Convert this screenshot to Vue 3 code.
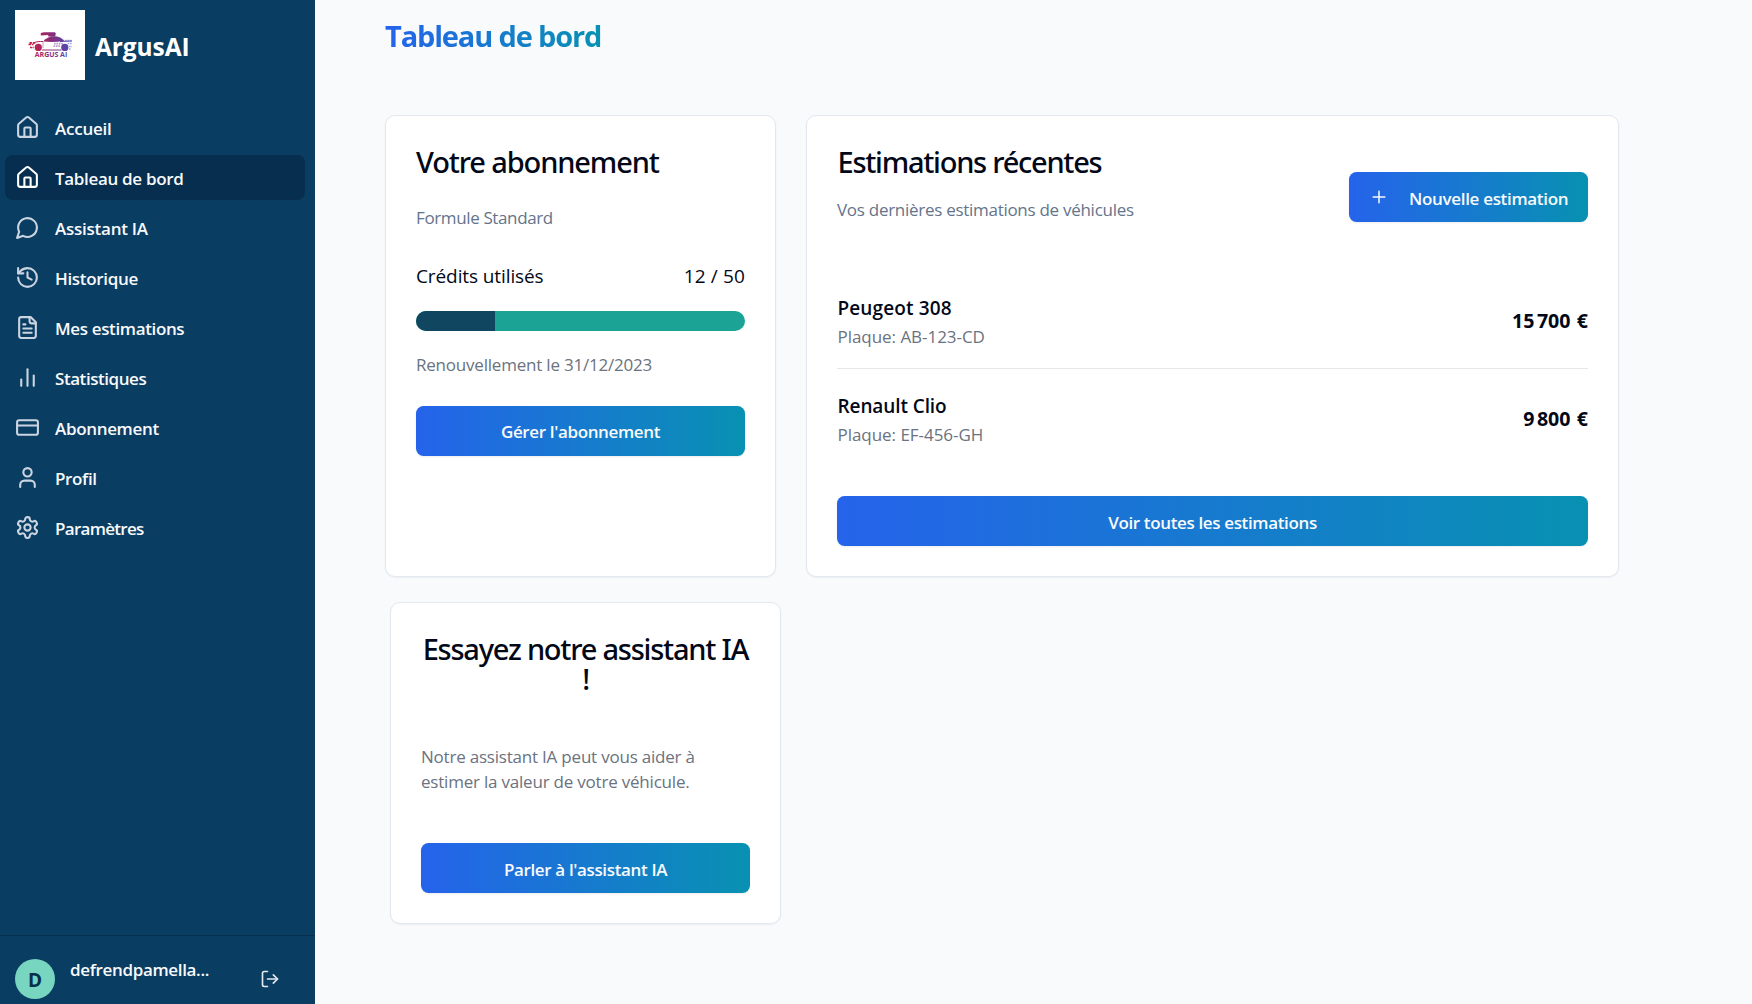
<script setup>
const nav = [
  { label: 'Accueil', icon: 'home', tracking: -0.24 },
  { label: 'Tableau de bord', icon: 'home', active: true, tracking: -0.32 },
  { label: 'Assistant IA', icon: 'chat', tracking: -0.25 },
  { label: 'Historique', icon: 'history', tracking: -0.33 },
  { label: 'Mes estimations', icon: 'file', tracking: -0.36 },
  { label: 'Statistiques', icon: 'chart', tracking: -0.44 },
  { label: 'Abonnement', icon: 'card', tracking: -0.33 },
  { label: 'Profil', icon: 'user', tracking: -0.36 },
  { label: 'Paramètres', icon: 'settings', tracking: -0.7 }
]

const icons = {
  home: '<path d="M15 21v-8a1 1 0 0 0-1-1h-4a1 1 0 0 0-1 1v8"/><path d="M3 10a2 2 0 0 1 .709-1.528l7-5.999a2 2 0 0 1 2.582 0l7 5.999A2 2 0 0 1 21 10v9a2 2 0 0 1-2 2H5a2 2 0 0 1-2-2z"/>',
  chat: '<path d="M7.9 20A9 9 0 1 0 4 16.1L2 22Z"/>',
  history: '<path d="M3 12a9 9 0 1 0 9-9 9.75 9.75 0 0 0-6.74 2.74L3 8"/><path d="M3 3v5h5"/><path d="M12 7v5l4 2"/>',
  file: '<path d="M15 2H6a2 2 0 0 0-2 2v16a2 2 0 0 0 2 2h12a2 2 0 0 0 2-2V7Z"/><path d="M14 2v4a2 2 0 0 0 2 2h4"/><path d="M10 9H8"/><path d="M16 13H8"/><path d="M16 17H8"/>',
  chart: '<path d="M18 20V10"/><path d="M12 20V4"/><path d="M6 20v-6"/>',
  card: '<rect width="20" height="14" x="2" y="5" rx="2"/><path d="M2 10h20"/>',
  user: '<path d="M19 21v-2a4 4 0 0 0-4-4H9a4 4 0 0 0-4 4v2"/><circle cx="12" cy="7" r="4"/>',
  settings: '<path d="M12.22 2h-.44a2 2 0 0 0-2 2v.18a2 2 0 0 1-1 1.73l-.43.25a2 2 0 0 1-2 0l-.15-.08a2 2 0 0 0-2.73.73l-.22.38a2 2 0 0 0 .73 2.73l.15.1a2 2 0 0 1 1 1.72v.51a2 2 0 0 1-1 1.74l-.15.09a2 2 0 0 0-.73 2.73l.22.38a2 2 0 0 0 2.73.73l.15-.08a2 2 0 0 1 2 0l.43.25a2 2 0 0 1 1 1.73V20a2 2 0 0 0 2 2h.44a2 2 0 0 0 2-2v-.18a2 2 0 0 1 1-1.73l.43-.25a2 2 0 0 1 2 0l.15.08a2 2 0 0 0 2.73-.73l.22-.39a2 2 0 0 0-.73-2.73l-.15-.08a2 2 0 0 1-1-1.74v-.5a2 2 0 0 1 1-1.74l.15-.09a2 2 0 0 0 .73-2.73l-.22-.38a2 2 0 0 0-2.73-.73l-.15.08a2 2 0 0 1-2 0l-.43-.25a2 2 0 0 1-1-1.73V4a2 2 0 0 0-2-2z"/><circle cx="12" cy="12" r="3"/>'
}

const used = 12
const total = 50

const estimations = [
  { name: 'Peugeot 308', plate: 'AB-123-CD', price: '15\u202f700 €', tracking: 0.12 },
  { name: 'Renault Clio', plate: 'EF-456-GH', price: '9\u202f800 €', tracking: -0.1 }
]
</script>

<template>
  <div class="app">
    <aside class="sidebar">
      <div class="brand">
        <svg class="logo" width="70" height="70" viewBox="0 0 70 70">
          <defs>
            <linearGradient id="brandGradient" gradientUnits="userSpaceOnUse" x1="13" y1="0" x2="57" y2="0">
              <stop offset="0" stop-color="#d0213f" />
              <stop offset=".5" stop-color="#8d2a74" />
              <stop offset="1" stop-color="#4550bd" />
            </linearGradient>
          </defs>
          <rect width="70" height="70" fill="#fff" />
          <g fill="url(#brandGradient)">
            <path d="M25.700 23l3.300-.8h11l.8 1.200-.6 3.200h-7v-1.600l-7.300.5z" />
            <path d="M28 31.500c3-3.300 6.500-5.300 11-5.300 4.500 0 8 2 10.500 4.500-7 1.400-14 1.600-21.500.8z" />
            <circle cx="23.300" cy="37.400" r="3.600" />
            <circle cx="49.800" cy="37.400" r="3.600" />
          </g>
          <g fill="none" stroke="url(#brandGradient)">
            <path d="M18.500 32.800c3-1.200 6-1.400 9.500-1.300M27 40h19.500M45 31.500l12-.500" stroke-width="1" />
            <path d="M13.500 34.500h5M15 37.500h4M14.500 32.800h6" stroke-width="1.700" stroke-dasharray="2.500 .8" />
            <path d="M39 33.700h9M38.500 36.200h7M50 30.500h7M52.500 33.500h4.500M54 36.500h3M54 39h2" stroke-width="1.700" stroke-dasharray="1.700 .7" opacity=".5" />
            <path d="M28 32v6" stroke-width=".8" opacity=".6" />
          </g>
          <text x="19.800" y="47.300" textLength="32.400" lengthAdjust="spacingAndGlyphs" fill="url(#brandGradient)" class="logo-text">ARGUS AI</text>
        </svg>
        <span class="brand-name">ArgusAI</span>
      </div>

      <nav class="nav">
        <a v-for="item in nav" :key="item.label" class="nav-item" :class="{ active: item.active }">
          <svg class="nav-icon" viewBox="0 0 24 24" v-html="icons[item.icon]"></svg>
          <span class="nav-label" :style="{ letterSpacing: item.tracking + 'px' }">{{ item.label }}</span>
        </a>
      </nav>

      <div class="account">
        <span class="avatar">D</span>
        <span class="account-name">defrendpamella...</span>
        <svg class="logout" viewBox="0 0 24 24">
          <path d="M9 21H5a2 2 0 0 1-2-2V5a2 2 0 0 1 2-2h4" />
          <path d="m16 17 5-5-5-5" />
          <path d="M21 12H9" />
        </svg>
      </div>
    </aside>

    <main class="main">
      <h1 class="page-title">Tableau de bord</h1>

      <div class="cards">
        <section class="card">
          <h2 class="card-title">Votre abonnement</h2>
          <p class="muted plan">Formule Standard</p>
          <div class="credits">
            <span class="credits-label">Crédits utilisés</span>
            <span class="credits-count">{{ used }} / {{ total }}</span>
          </div>
          <div class="progress">
            <div class="progress-bar" :style="{ width: (used / total) * 100 + '%' }"></div>
          </div>
          <p class="muted gray renewal">Renouvellement le 31/12/2023</p>
          <button class="btn btn-manage">Gérer l'abonnement</button>
        </section>

        <section class="card">
          <header class="card-head">
            <div>
              <h2 class="card-title tight">Estimations récentes</h2>
              <p class="muted subtitle">Vos dernières estimations de véhicules</p>
            </div>
            <button class="btn btn-new">
              <svg class="plus" viewBox="0 0 24 24"><path d="M5 12h14M12 5v14" /></svg>
              <span>Nouvelle estimation</span>
            </button>
          </header>
          <ul class="list">
            <li v-for="e in estimations" :key="e.plate" class="row">
              <div>
                <p class="car" :style="{ letterSpacing: e.tracking + 'px' }">{{ e.name }}</p>
                <p class="muted gray plate">Plaque: {{ e.plate }}</p>
              </div>
              <span class="price">{{ e.price }}</span>
            </li>
          </ul>
          <button class="btn">Voir toutes les estimations</button>
        </section>
      </div>

      <section class="card assistant">
        <h2 class="card-title centered">Essayez notre assistant IA !</h2>
        <p class="muted gray pitch">Notre assistant IA peut vous aider à estimer la valeur de votre véhicule.</p>
        <button class="btn">Parler à l'assistant IA</button>
      </section>
    </main>
  </div>
</template>

<style>
body {
  background: #f9fafc;
}
</style>

<style scoped>
.app {
  display: flex;
  height: 1004px;
  overflow: hidden;
  background: #f9fafc;
  color: #020817;
  font-family: "Open Sans", "Noto Sans", sans-serif;
  font-size: 17px;
  line-height: 25px;
}
h1, h2, p, ul {
  margin: 0;
  padding: 0;
}
.sidebar {
  display: flex;
  flex-direction: column;
  flex: none;
  width: 315px;
  background: #0a3d62;
  color: #f8fafc;
}
.brand {
  display: flex;
  align-items: center;
  gap: 10px;
  padding: 10px 15px 25px;
}
.logo {
  display: block;
  flex: none;
}
.logo-text {
  font: 700 6.2px "Open Sans", sans-serif;
}
.brand-name {
  padding-top: 3px;
  font-size: 24.5px;
  font-weight: 700;
  letter-spacing: -0.1px;
  color: #fff;
}
.nav {
  display: flex;
  flex-direction: column;
  flex: 1;
  gap: 5px;
  padding: 0 10px 0 5px;
}
.nav-item {
  display: flex;
  align-items: center;
  gap: 15px;
  height: 45px;
  padding-left: 10px;
  border-radius: 7.5px;
  font-weight: 600;
}
.nav-item.active {
  background: #072e4e;
}
.nav-icon {
  width: 25px;
  height: 25px;
  fill: none;
  stroke: #cbd5e1;
  stroke-width: 2;
  stroke-linecap: round;
  stroke-linejoin: round;
}
.active .nav-icon {
  stroke: #fff;
}
.nav-label {
  padding-top: 1px;
}
.account {
  display: flex;
  align-items: flex-start;
  height: 45px;
  padding: 23px 35px 0 15px;
  border-top: 1px solid #072e4e;
}
.avatar {
  width: 40px;
  height: 40px;
  border-radius: 50%;
  background: #78d6c0;
  color: #072e4e;
  font-size: 19px;
  font-weight: 700;
  line-height: 42px;
  text-align: center;
}
.account-name {
  flex: 1;
  margin: -2px 0 0 15px;
  font-weight: 600;
  letter-spacing: -0.34px;
}
.logout {
  width: 20px;
  height: 20px;
  margin-top: 10px;
  fill: none;
  stroke: #e2e8f0;
  stroke-width: 2;
  stroke-linecap: round;
  stroke-linejoin: round;
}
.main {
  flex: 1;
  padding: 17px 0 0 70px;
}
.page-title {
  width: fit-content;
  margin-bottom: 60px;
  font-size: 29px;
  font-weight: 700;
  line-height: 38px;
  letter-spacing: -1.16px;
  background: linear-gradient(to right, #2563eb, #0891b2);
  background-clip: text;
  -webkit-background-clip: text;
  color: transparent;
}
.cards {
  display: grid;
  grid-template-columns: 391px 813px;
  gap: 30px;
  height: 462px;
}
.card {
  box-sizing: border-box;
  padding: 31px 30px 30px;
  border: 1px solid #e2e8f0;
  border-radius: 10px;
  background: #fff;
  box-shadow: 0 1px 2px rgba(0, 0, 0, 0.05);
}
.card-title {
  font-family: "Noto Sans", "Open Sans", sans-serif;
  font-size: 29px;
  font-weight: 500;
  line-height: 30px;
  letter-spacing: -1.12px;
}
.card-title.tight {
  padding-left: 0.5px;
  letter-spacing: -1.25px;
}
.card-title.centered {
  text-align: center;
  letter-spacing: -1.22px;
}
.muted {
  color: #64748b;
  letter-spacing: -0.21px;
}
.gray {
  color: #6b7280;
}
.plan {
  margin-top: 28px;
  letter-spacing: -0.37px;
}
.credits {
  display: flex;
  justify-content: space-between;
  margin-top: 31px;
  font-size: 19px;
  line-height: 30px;
}
.credits-label {
  letter-spacing: -0.1px;
}
.credits-count {
  letter-spacing: 0.15px;
}
.progress {
  height: 20px;
  margin-top: 20px;
  overflow: hidden;
  border-radius: 10px;
  background: #1ba496;
}
.progress-bar {
  height: 100%;
  background: #10465f;
}
.renewal {
  margin: 21px 0 29px;
}
.btn {
  display: flex;
  align-items: center;
  justify-content: center;
  box-sizing: border-box;
  width: 100%;
  height: 50px;
  padding: 2px 0 0;
  border: 0;
  border-radius: 7.5px;
  background: linear-gradient(to right, #2563eb, #0891b2);
  box-shadow: 0 1px 2px rgba(0, 0, 0, 0.08);
  color: #f8fafc;
  font: 600 17px/25px "Open Sans", sans-serif;
  letter-spacing: -0.36px;
}
.btn-manage {
  padding-top: 0;
}
.card-head {
  display: flex;
  align-items: flex-end;
  justify-content: space-between;
}
.subtitle {
  margin-top: 20px;
  letter-spacing: -0.28px;
}
.btn-new {
  justify-content: flex-start;
  width: 239px;
  padding-left: 20px;
  letter-spacing: -0.32px;
}
.plus {
  width: 20px;
  height: 20px;
  margin: -2px 20px 0 0;
  fill: none;
  stroke: currentColor;
  stroke-width: 1.8;
  stroke-linecap: round;
}
.list {
  margin: 71px 0 49px;
  list-style: none;
}
.row {
  display: flex;
  align-items: center;
  justify-content: space-between;
}
.row + .row {
  margin-top: 19px;
  padding-top: 22px;
  border-top: 1px solid #e5e7eb;
}
.car {
  padding-left: 0.5px;
  font-size: 19px;
  font-weight: 600;
  line-height: 30px;
}
.plate {
  margin-top: 1px;
  padding-left: 0.5px;
  letter-spacing: -0.04px;
}
.price {
  font-size: 19.6px;
  font-weight: 700;
  line-height: 30px;
  letter-spacing: 0.25px;
  word-spacing: 1.2px;
}
.assistant {
  width: 391px;
  height: 322px;
  margin: 25px 0 0 5px;
}
.pitch {
  margin: 50px 0 49px;
}
</style>
